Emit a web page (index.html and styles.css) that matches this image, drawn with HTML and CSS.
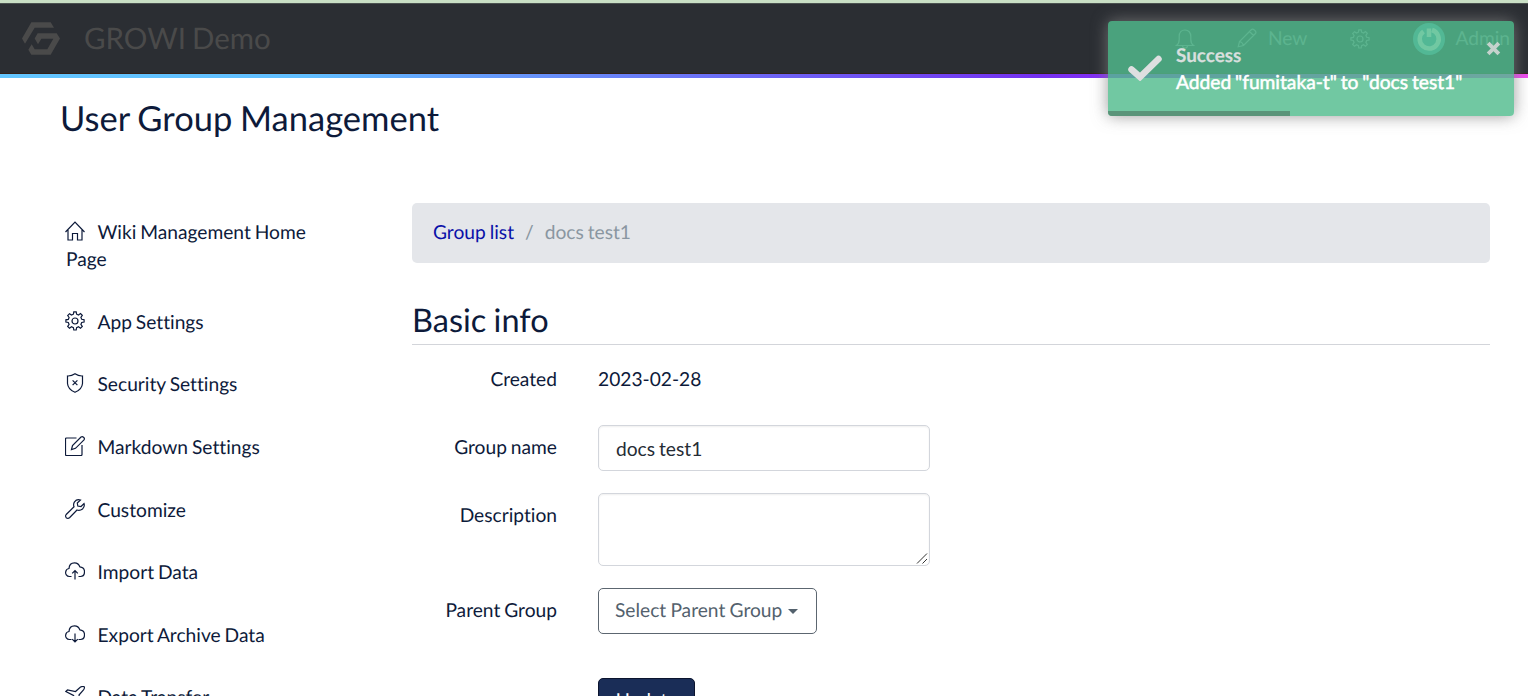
FILE: index.html
```html
<!DOCTYPE html>
<html lang="en">
<head>
<meta charset="utf-8">
<title>User Group Management</title>
<link rel="stylesheet" href="styles.css">
</head>
<body>
<svg class="defs" width="0" height="0">
  <symbol id="gear" viewBox="0 0 20 20"><path d="M8.4 3.2 8.8.8h2.4l.4 2.4 1.9.8 2-1.4 1.8 1.8-1.4 2 .8 1.9 2.4.4v2.4l-2.4.4-.8 1.9 1.4 2-1.8 1.8-2-1.4-1.9.8-.4 2.4H8.8l-.4-2.4-1.9-.8-2 1.4-1.8-1.8 1.4-2-.8-1.9-2.4-.4V8.8l2.4-.4.8-1.900-1.400-2 1.800-1.800 2 1.400z"/><circle cx="10" cy="10" r="3"/></symbol>
</svg>
<header class="navbar">
  <a class="brand">
    <svg class="logo" viewBox="66 66 114 98"><path d="M94 66H152L162 83H104L75 131L66 115Z"/><path d="M113 99H170L180 115L152 164H94L85 149L95 132L104 147H142L160 116H124L114 132L104 115Z"/></svg>
    <span>GROWI Demo</span>
  </a>
  <nav class="tools">
    <svg class="icon bell" viewBox="0 0 20 20"><path d="M1.500 16.500h17c-2-1.500-2.700-3.500-2.700-6V7.500C15.800 3.500 13.500 1 10 1S4.200 3.500 4.200 7.500v3c0 2.500-.7 4.500-2.700 6zM7.500 17c.3 2.700 4.700 2.700 5 0"/></svg>
    <span class="new"><svg class="icon" viewBox="0 0 20 20"><path d="M1.200 18.800 2.500 13.500 14.500 1.500q1.200-1 2.500.2l1.300 1.300q1.200 1.300.2 2.500L6.500 17.500zM12.500 3.500l4 4M2.500 13.500q3 .5 4 4"/></svg>New</span>
    <svg class="icon cog"><use href="#gear"/></svg>
    <span class="user"><svg class="avatar" viewBox="0 0 32 32"><circle class="disc" cx="16" cy="16" r="16"/><path d="M10.500 8.500A9.500 9.500 0 1 0 19 7M16 5.500V14"/></svg>Admin</span>
  </nav>
</header>
<div class="rainbow"></div>
<h1>User Group Management</h1>
<div class="layout">
  <aside class="menu">
    <a><svg class="icon" viewBox="0 0 20 20"><path d="M.5 11 10 1l9.500 10M3 9v10h4.500v-6.500h5V19H17V9"/></svg>Wiki Management Home Page</a>
    <a><svg class="icon"><use href="#gear"/></svg>App Settings</a>
    <a><svg class="icon" viewBox="0 0 20 20"><path d="M10 .8Q13.500 3.200 17.500 3V10.500Q17 16.500 10 19.300 3 16.500 2.500 10.500V3Q6.500 3.200 10 .8zM7.600 7.300l4.800 4.800M12.400 7.300l-4.800 4.800"/></svg>Security Settings</a>
    <a><svg class="icon" viewBox="0 0 20 20"><path d="M11.500 2H1.500q-1 0-1 1v15.500q0 1 1 1H16q1 0 1-1V9M6.500 13.500 7.500 9.500 16 1q1.300-.8 2.500.2 1.500 1.300.5 2.600L10.500 12.300z"/></svg>Markdown Settings</a>
    <a><svg class="icon" viewBox="0 0 20 20"><path d="M15.500 1Q11.800-.3 9.500 2.800 8 5 9 7.800L1.200 15.500Q0 17 1.200 18.700 3 20 4.500 18.700L12 11Q15 12 17.500 10 20 7.500 19 4.500L16 7.500 12.800 7 12.300 4z"/></svg>Customize</a>
    <a><svg class="icon" viewBox="0 0 20 20"><path d="M6.500 15.500H4.500C1.500 15.500.3 12.800.7 10.800 1 8.800 2.600 7.700 4 7.500 4.200 4 6.500 1.800 9.500 1.800c2.800 0 4.500 1.500 5.300 4 3 .2 4.700 2.400 4.700 5 0 2.800-1.800 4.700-4 4.700h-2M10 18.500V9.500M7.200 12.300 10 9.500l2.800 2.800"/></svg>Import Data</a>
    <a><svg class="icon" viewBox="0 0 20 20"><path d="M6.500 15.500H4.500C1.500 15.500.3 12.800.7 10.800 1 8.800 2.600 7.700 4 7.500 4.200 4 6.500 1.800 9.500 1.800c2.800 0 4.500 1.500 5.300 4 3 .2 4.700 2.400 4.700 5 0 2.800-1.800 4.700-4 4.700h-2M10 9.500v8.500M7.200 15.200 10 18l2.800-2.800"/></svg>Export Archive Data</a>
    <a><svg class="icon" viewBox="0 0 20 20"><path d="M.8 5.500 2.500 4l8 1.500L15.500 1q2.500-1 3.700-.3.700 1.300-.7 3.300L14 9l1.500 8-1.500 2-4-7.500-3.500 3.500.2 3-1.200 1-1.700-3.500L.5 14l1-1.200 3 .2L8.500 9.500z"/></svg>Data Transfer</a>
  </aside>
  <main>
    <div class="breadcrumb"><a>Group list</a><i>/</i><span>docs test1</span></div>
    <h2>Basic info</h2>
    <form>
      <div class="row created"><label>Created</label><div>2023-02-28</div></div>
      <div class="row"><label>Group name</label><input class="field" type="text" value="docs test1"></div>
      <div class="row"><label>Description</label><div class="field area"><svg viewBox="0 0 12 12"><path d="M1 11.500 11 1.500M6.500 11.500 11 7"/></svg></div></div>
      <div class="row"><label>Parent Group</label><button class="select" type="button">Select Parent Group<b></b></button></div>
      <div class="row submit"><label></label><button class="update" type="button">Update</button></div>
    </form>
  </main>
</div>
<div class="toast">
  <svg class="check" viewBox="0 0 34 26"><path d="M3.500 14.500 12 22 30.500 4"/></svg>
  <div class="message"><strong>Success</strong><p>Added "fumitaka-t" to "docs test1"</p></div>
  <svg class="close" viewBox="0 0 14 14"><path d="M2 2l10 10M12 2 2 12"/></svg>
  <div class="progress"></div>
</div>
</body>
</html>
```
FILE: styles.css
```css
* { box-sizing: border-box; }
html { overflow: hidden; }
body {
  margin: 0;
  height: 696px;
  overflow: hidden;
  background: #fff;
  color: #0d1a3a;
  font-family: Lato, "Liberation Sans", sans-serif;
  font-size: 19.2px;
  line-height: 27.3px;
  word-spacing: -1px;
  font-variant-ligatures: none;
  text-rendering: geometricPrecision;
}
.defs { display: block; }
.icon {
  width: 20px;
  height: 20px;
  fill: none;
  stroke: currentColor;
  stroke-width: 1.2;
}
.navbar {
  display: flex;
  justify-content: space-between;
  height: 74px;
  padding: 0 18px 0 22px;
  background: #2b2e33;
  border-top: 3px solid #c9dfc5;
  box-shadow: inset 0 1px #4b5250, inset 0 -1px #32231b;
  color: #4a4a4a;
}
.brand { display: flex; align-items: center; gap: 24px; font-size: 29.5px; word-spacing: -1.5px; }
.logo { width: 38px; height: 33px; fill: #4a4a4a; }
.tools { display: flex; align-items: center; color: #8c9196; }
.tools span { display: flex; align-items: center; }
.new { margin-left: 42px; }
.new .icon { margin-right: 11px; }
.cog { margin-left: 43px; }
.user { margin-left: 43px; }
.avatar { width: 32px; height: 32px; margin-right: 10px; fill: none; stroke: #fff; stroke-width: 4.5; }
.avatar .disc { fill: #53a5b8; stroke: none; }
.rainbow { height: 4px; background: linear-gradient(90deg, #63c6ff 0%, #62bfff 20%, #7430f0 68%, #8d2cf5 75%, #f04bf0 100%); }
h1, h2 { margin: 0; font-weight: 400; }
h1 { margin: 19px 0 0 60px; font-size: 34.5px; line-height: 44px; }
.layout { display: flex; padding: 62px 38px 0 66px; }
.menu { width: 346px; display: flex; flex-direction: column; gap: 35.300px; padding-top: 16px; }
.menu a { width: 260px; }
.menu .icon { margin: 0 12.500px 0 -1px; vertical-align: -2px; }
main { flex: 1; }
.breadcrumb {
  display: flex;
  align-items: center;
  height: 60px;
  padding: 0 21px 1px;
  border-radius: 5px;
  background: #e4e6ea;
  color: #8a96a1;
}
.breadcrumb a { color: #0a10a8; }
.breadcrumb i { margin: 0 11px; font-style: normal; }
h2 { height: 82px; padding-top: 36px; border-bottom: 1px solid #d3d5da; font-size: 32.5px; line-height: 42px; }
form { display: flex; flex-direction: column; gap: 22px; padding-top: 21px; }
.row { display: flex; }
.row label { width: 145px; margin-right: 41px; padding-top: 9px; text-align: right; }
.created { height: 37px; }
.created label { padding: 0; }
.field {
  width: 332px;
  height: 46px;
  padding: 0 17px;
  border: 1px solid #d3d6dc;
  border-radius: 5px;
  background: #fff;
  box-shadow: inset 0 1px 2px #0001;
  color: #252c35;
  font: inherit;
  word-spacing: inherit;
}
.area { display: flex; align-items: flex-end; justify-content: flex-end; height: 73px; padding: 0 1px 1px 0; }
.area svg { width: 12px; height: 12px; fill: none; stroke: #333; }
.select, .update { height: 46px; padding: 0 16px; border: 1px solid #5c6670; border-radius: 5px; background: #fff; color: #53616d; font: inherit; text-rendering: inherit; }
.select { width: 219px; display: flex; align-items: center; white-space: nowrap; word-spacing: -.7px; }
.select b { margin-left: 6px; border: 5.500px solid transparent; border-top-color: currentColor; border-bottom: 0; }
.submit { margin-top: 22px; }
.update { width: 97px; border-color: #0b142e; background: #1a2d57; color: #fff; }
.toast {
  position: absolute;
  left: 1108px;
  top: 21px;
  width: 406px;
  height: 95px;
  display: flex;
  padding: 20px;
  border-radius: 4px;
  background: rgba(82, 188, 142, .82);
  box-shadow: 0 0 16px rgba(130, 130, 130, .8);
  color: #fff;
}
.check { width: 34px; height: 26px; margin: 14px 14px 0 0; fill: none; stroke: #dedfe0; stroke-width: 6.500; stroke-linecap: round; }
.message { padding-top: .5px; }
.message strong { display: block; color: #d8dfdd; font-size: 18.9px; line-height: 27px; -webkit-text-stroke: .2px currentColor; }
.message p { margin: 0; white-space: nowrap; -webkit-text-stroke: .5px currentColor; }
.close { position: absolute; right: 13px; top: 20px; width: 15px; height: 15px; stroke: #c5d2cd; stroke-width: 3.6; }
.progress { position: absolute; left: 0; bottom: 0; width: 182px; height: 5px; border-bottom-left-radius: 4px; background: #5a9479; }
```
